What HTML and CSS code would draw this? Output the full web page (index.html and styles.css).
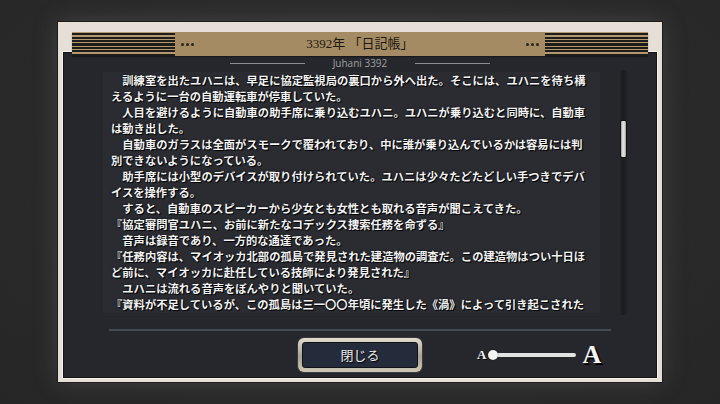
FILE: index.html
```html
<!DOCTYPE html>
<html lang="ja">
<head>
<meta charset="utf-8">
<title>日記帳</title>
<link rel="stylesheet" href="styles.css">
</head>
<body>
<div class="frame">
  <div class="header">
    <div class="stripes stripes-left"></div>
    <div class="dots"><i></i><i></i><i></i></div>
    <div class="title">3392年 「日記帳」</div>
    <div class="dots"><i></i><i></i><i></i></div>
    <div class="stripes stripes-right"></div>
  </div>
  <div class="panel">
    <div class="sub">
      <span class="sub-line"></span>
      <span class="sub-text">Juhani 3392</span>
      <span class="sub-line"></span>
    </div>
    <div class="content">
      <div class="textbox">
        <div class="ln">　訓練室を出たユハニは、早足に協定監視局の裏口から外へ出た。そこには、ユハニを待ち構</div>
        <div class="ln">えるように一台の自動運転車が停車していた。</div>
        <div class="ln">　人目を避けるように自動車の助手席に乗り込むユハニ。ユハニが乗り込むと同時に、自動車</div>
        <div class="ln">は動き出した。</div>
        <div class="ln">　自動車のガラスは全面がスモークで覆われており、中に誰が乗り込んでいるかは容易には判</div>
        <div class="ln">別できないようになっている。</div>
        <div class="ln">　助手席には小型のデバイスが取り付けられていた。ユハニは少々たどたどしい手つきでデバ</div>
        <div class="ln">イスを操作する。</div>
        <div class="ln">　すると、自動車のスピーカーから少女とも女性とも取れる音声が聞こえてきた。</div>
        <div class="ln">『協定審問官ユハニ、お前に新たなコデックス捜索任務を命ずる』</div>
        <div class="ln">　音声は録音であり、一方的な通達であった。</div>
        <div class="ln">『任務内容は、マイオッカ北部の孤島で発見された建造物の調査だ。この建造物はつい十日ほ</div>
        <div class="ln">ど前に、マイオッカに赴任している技師により発見された』</div>
        <div class="ln">　ユハニは流れる音声をぼんやりと聞いていた。</div>
        <div class="ln">『資料が不足しているが、この孤島は三一〇〇年頃に発生した《渦》によって引き起こされた</div>
      </div>
      <div class="scroll"><div class="thumb"></div></div>
    </div>
    <div class="divider"></div>
    <div class="footer">
      <div></div>
      <div class="btn"><span class="btn-inner">閉じる</span></div>
      <div class="slider">
        <span class="a-small">A</span>
        <span class="knob"></span>
        <span class="bar"></span>
        <span class="a-big">A</span>
      </div>
    </div>
  </div>
</div>
</body>
</html>
```
FILE: styles.css
```css
html, body {
  margin: 0;
  padding: 0;
}
body {
  width: 720px;
  height: 404px;
  overflow: hidden;
  background: radial-gradient(ellipse at 50% 40%, #303030 0%, #2a2a2a 60%, #262626 100%);
  font-family: "Noto Sans CJK JP", "Noto Sans", sans-serif;
}
.frame {
  box-sizing: border-box;
  margin: 22px 0 0 58px;
  width: 604px;
  height: 360px;
  background: #e5dfd8;
  padding: 10px 6px 5px 6px;
  display: flex;
  flex-direction: column;
  box-shadow: 0 0 0 1px #1c1c1c, 0 0 22px rgba(120,120,120,0.35);
}
.header {
  position: relative;
  z-index: 2;
  margin: 0 8px;
  height: 24px;
  background: #a48b63;
  display: flex;
  align-items: center;
  box-shadow: 0 1px 1px rgba(0,0,0,0.35);
}
.stripes {
  height: 24px;
  background: repeating-linear-gradient(to bottom, #b29870 0, #b29870 1.2px, #1e1c19 1.2px, #1e1c19 3.4px);
}
.stripes-left { width: 103px; }
.stripes-right { width: 103px; }
.dots {
  display: flex;
  gap: 2px;
  margin: 0 6px;
}
.dots i {
  display: block;
  width: 3px;
  height: 3px;
  border-radius: 50%;
  background: #2a2419;
}
.title {
  flex: 1;
  text-align: center;
  font-family: "Liberation Serif", "Noto Sans CJK JP", serif;
  font-size: 13px;
  color: #1d1810;
  line-height: 24px;
}
.panel {
  flex: 1;
  margin-top: -3px;
  background: #26272c;
  box-shadow: 0 0 0 1px #141414, 0 0 0 2px #f6f3ee;
  display: flex;
  flex-direction: column;
}
.sub {
  margin-top: 4px;
  height: 12px;
  display: flex;
  align-items: center;
  justify-content: center;
  gap: 28px;
}
.sub-line {
  width: 75px;
  height: 1px;
  background: #8c8e92;
}
.sub-text {
  font-family: "Open Sans", "Noto Sans", sans-serif;
  font-size: 10px;
  color: #9ea0a4;
  line-height: 12px;
}
.content {
  margin-top: 3px;
  height: 241px;
  display: flex;
  padding-left: 39px;
}
.textbox {
  box-sizing: border-box;
  width: 497px;
  height: 241px;
  overflow: hidden;
  background: #2b2c31;
  padding: 0 0 0 8px;
  font-family: "Noto Sans CJK JP", sans-serif;
  font-weight: 700;
  font-size: 11.3px;
  line-height: 16px;
  color: #f3f3f3;
  text-shadow: 1px 1px 0 #000, 0 0 2px #000;
}
.ln {
  white-space: nowrap;
  height: 16px;
}
.scroll {
  margin: -2px 0 0 20px;
  width: 7px;
  height: 245px;
  background: linear-gradient(to right, #222327, #1b1c1f, #222327);
  position: relative;
}
.thumb {
  margin-top: 50px;
  width: 7px;
  height: 38px;
  box-sizing: border-box;
  border: 1px solid #111;
  border-radius: 2px;
  background: linear-gradient(to right, #9c9c9c, #e6e6e6 40%, #d0d0d0 70%, #9a9a9a);
}
.divider {
  margin: 16px 45px 0 45px;
  height: 2px;
  background: #444a51;
}
.footer {
  margin-top: 7px;
  height: 34px;
  display: grid;
  grid-template-columns: 1fr 124px 1fr;
  align-items: center;
}
.btn {
  box-sizing: border-box;
  width: 124px;
  height: 34px;
  padding: 4px;
  border-radius: 6px;
  background: linear-gradient(to bottom, #e2dccf, #a8a294 55%, #cfc8b8);
  box-shadow: 0 0 0 1px #3a3a3a;
}
.btn-inner {
  display: block;
  box-sizing: border-box;
  height: 26px;
  border: 1px solid #101216;
  border-radius: 3px;
  background: #242b3b;
  color: #ececec;
  font-size: 13px;
  line-height: 24px;
  text-align: center;
  text-shadow: 1px 1px 1px #000;
}
.slider {
  display: flex;
  align-items: center;
  margin-left: 55px;
}
.a-small {
  font-family: "Liberation Serif", serif;
  font-weight: 700;
  font-size: 13px;
  color: #f5f5f5;
  text-shadow: 1px 1px 0 #000;
  line-height: 14px;
}
.knob {
  position: relative;
  z-index: 1;
  margin-left: 2px;
  width: 10px;
  height: 10px;
  border-radius: 50%;
  background: #f4f4f4;
  box-shadow: 0 0 1px #000;
}
.bar {
  margin-left: -5px;
  width: 83px;
  height: 4px;
  border-radius: 2px;
  background: #e2e2e2;
}
.a-big {
  margin-left: 6px;
  font-family: "Liberation Serif", serif;
  font-weight: 700;
  font-size: 26px;
  color: #f5f5f5;
  text-shadow: 2px 2px 0 #000;
  line-height: 26px;
}
```
